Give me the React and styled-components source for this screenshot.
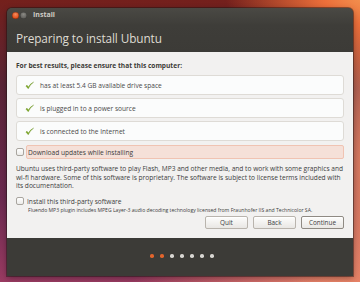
import React from 'react';
import styled, { createGlobalStyle } from 'styled-components';

const Global = createGlobalStyle`
  html, body {
    margin: 0;
    padding: 0;
    width: 360px;
    height: 282px;
    overflow: hidden;
  }
  body {
    font-family: "Open Sans", "DejaVu Sans", sans-serif;
    background:
      radial-gradient(ellipse 150px 100px at 375px -10px, #f6a35a 0%, #ec6f3a 35%, rgba(214, 80, 50, 0) 100%),
      radial-gradient(ellipse 90px 240px at 370px 170px, rgba(240, 140, 100, 0.9) 0%, rgba(210, 100, 100, 0) 100%),
      radial-gradient(ellipse 200px 120px at 330px 300px, #f08a6a 0%, rgba(210, 100, 100, 0) 100%),
      linear-gradient(180deg, #74201c 0%, #5a2536 30%, #6b2a50 70%, #9a3b62 100%);
  }
`;

const Page = styled.div`
  width: 360px;
  height: 282px;
  padding: 8px 7px 0 7px;
  box-sizing: border-box;
`;

const Window = styled.div`
  width: 346px;
  height: 268px;
  display: flex;
  flex-direction: column;
  border-radius: 5px 5px 0 0;
  overflow: hidden;
  box-shadow: 0 0 0 1px rgba(30, 20, 20, 0.45), 0 2px 6px rgba(0, 0, 0, 0.35);
  background: #3c3b37;
`;

const TitleBar = styled.div`
  height: 44px;
  background: linear-gradient(180deg, #4a4944 0%, #3e3d39 40%, #3c3b37 100%);
  padding: 3px 9px 0 5px;
  box-sizing: border-box;
  display: flex;
  flex-direction: column;
`;

const Controls = styled.div`
  display: flex;
  align-items: center;
  height: 8px;
`;

const Dot = styled.span`
  width: 7px;
  height: 7px;
  border-radius: 50%;
  margin-right: 1px;
  background: ${p => (p.$close
    ? 'radial-gradient(circle at 50% 35%, #f58a5c, #df4a16 70%)'
    : 'radial-gradient(circle at 50% 35%, #8a8984, #5e5d59 70%)')};
  box-shadow: inset 0 0 0 0.5px rgba(0, 0, 0, 0.4);
`;

const WinTitle = styled.span`
  margin-left: 5px;
  font-family: "Open Sans", sans-serif;
  font-weight: 700;
  font-size: 7px;
  color: #cfccc5;
  line-height: 8px;
`;

const Heading = styled.h1`
  margin: 12px 0 0 4px;
  font-family: "Open Sans", sans-serif;
  font-weight: 400;
  font-size: 11.8px;
  letter-spacing: -0.1px;
  color: #dfdbd2;
  line-height: 14px;
`;

const Content = styled.div`
  height: 186px;
  background: #f2f1f0;
  padding: 9px 9px 0 9px;
  box-sizing: border-box;
  display: flex;
  flex-direction: column;
  color: #3c3c3c;
  font-size: 6.6px;
`;

const Lead = styled.div`
  font-weight: 700;
  font-size: 6.6px;
  line-height: 9px;
  color: #3c3b37;
  margin-bottom: 5px;
`;

const Check = styled.div`
  height: 18px;
  background: #fbfcfc;
  border: 1px solid #dedbd6;
  border-radius: 3px;
  display: flex;
  align-items: center;
  padding-left: 8px;
  margin-bottom: 3px;
  font-size: 6.6px;
  color: #4a4a4a;
`;

const Tick = () => (
  <svg width="9" height="9" viewBox="0 0 10 10" style={{ marginRight: 6 }}>
    <path d="M1 5.6 L3.6 8.6 Q6 3.6 9.6 1.2 Q5.6 3 3.8 6.6 L2.2 4.6 Z" fill="#7aa820" stroke="#5f8a14" strokeWidth="0.4" />
  </svg>
);

const OptRow = styled.div`
  display: flex;
  align-items: center;
  margin-top: ${p => p.$top || 0}px;
`;

const Box = styled.span`
  width: 6px;
  height: 6px;
  border: 1px solid #a9a59f;
  border-radius: 2px;
  background: linear-gradient(#ffffff, #ecebe9);
  flex: none;
`;

const Highlight = styled.div`
  flex: 1;
  margin-left: 2px;
  height: 12px;
  background: #f5e0d8;
  border: 1px solid #f0c3b2;
  border-radius: 2px;
  display: flex;
  align-items: center;
  padding-left: 1px;
  font-size: 6.6px;
  color: #3c3c3c;
`;

const OptLabel = styled.span`
  margin-left: 3px;
  font-size: 6.6px;
  color: #3c3c3c;
`;

const Para = styled.p`
  margin: 6px 0 0 0;
  font-size: 6.6px;
  line-height: 8.6px;
  color: #3c3c3c;
`;

const Small = styled.div`
  margin: 1px 0 0 12px;
  font-size: 5.1px;
  line-height: 7px;
  color: #3c3c3c;
`;

const Buttons = styled.div`
  display: flex;
  justify-content: flex-end;
  gap: 5px;
  margin-top: 2px;
`;

const Button = styled.button`
  width: 43px;
  height: 13px;
  padding: 0;
  font-family: "Open Sans", sans-serif;
  font-size: 6.4px;
  color: #3c3c3c;
  border: 1px solid ${p => (p.$def ? '#8f8a83' : '#b9b4ad')};
  border-radius: 2px;
  background: linear-gradient(#fdfdfc, #e9e7e4);
  box-shadow: inset 0 1px 0 #fff;
`;

const Footer = styled.div`
  flex: 1;
  display: flex;
  justify-content: center;
  align-items: center;
  gap: 6.5px;
  padding-left: 4px;
  padding-bottom: 2px;
  background: #3c3b37;
`;

const Step = styled.span`
  width: 3.5px;
  height: 3.5px;
  border-radius: 50%;
  background: ${p => (p.$on ? '#e2642c' : '#d8d6d2')};
`;

const checks = [
  'has at least 5.4 GB available drive space',
  'is plugged in to a power source',
  'is connected to the Internet',
];

export default function App() {
  return (
    <Page>
      <Global />
      <Window>
        <TitleBar>
          <Controls>
            <Dot $close />
            <Dot />
            <WinTitle>Install</WinTitle>
          </Controls>
          <Heading>Preparing to install Ubuntu</Heading>
        </TitleBar>
        <Content>
          <Lead>For best results, please ensure that this computer:</Lead>
          {checks.map(c => (
            <Check key={c}>
              <Tick />
              {c}
            </Check>
          ))}
          <OptRow $top={1}>
            <Box />
            <Highlight>Download updates while installing</Highlight>
          </OptRow>
          <Para>
            Ubuntu uses third-party software to play Flash, MP3 and other media, and to work with some graphics and
            wi-fi hardware. Some of this software is proprietary. The software is subject to license terms included with
            its documentation.
          </Para>
          <OptRow $top={6}>
            <Box />
            <OptLabel>Install this third-party software</OptLabel>
          </OptRow>
          <Small>Fluendo MP3 plugin includes MPEG Layer-3 audio decoding technology licensed from Fraunhofer IIS and Technicolor SA.</Small>
          <Buttons>
            <Button>Quit</Button>
            <Button>Back</Button>
            <Button $def>Continue</Button>
          </Buttons>
        </Content>
        <Footer>
          {[1, 1, 0, 0, 0, 0, 0].map((on, i) => <Step key={i} $on={!!on} />)}
        </Footer>
      </Window>
    </Page>
  );
}
